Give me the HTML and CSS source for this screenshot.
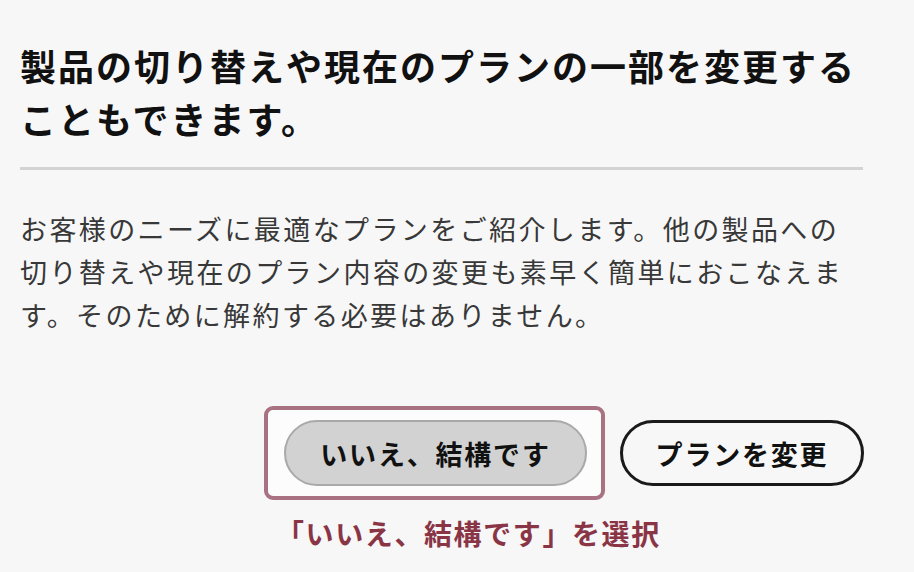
FILE: index.html
```html
<!DOCTYPE html>
<html lang="ja">
<head>
<meta charset="utf-8">
<title>プランの変更</title>
<link rel="stylesheet" href="styles.css">
</head>
<body>
<main class="dialog">
  <h1 class="title">製品の切り替えや現在のプランの一部を変更することもできます。</h1>
  <hr class="divider">
  <p class="desc">お客様のニーズに最適なプランをご紹介します。他の製品への切り替えや現在のプラン内容の変更も素早く簡単におこなえます。そのために解約する必要はありません。</p>
  <div class="actions">
    <div class="choice">
      <div class="highlight">
        <button class="btn btn-secondary">いいえ、結構です</button>
      </div>
      <div class="caption">「いいえ、結構です」を選択</div>
    </div>
    <button class="btn btn-outline">プランを変更</button>
  </div>
</main>
</body>
</html>
```

FILE: styles.css
```css
html, body {
  margin: 0;
  padding: 0;
  background: #f7f7f7;
}
body {
  width: 914px;
  height: 572px;
  overflow: hidden;
  font-family: "Noto Sans CJK JP", "Noto Sans", sans-serif;
}
.dialog {
  width: 843px;
  padding: 39px 0 0 20px;
}
.title {
  margin: 0;
  font-size: 36px;
  line-height: 53px;
  font-weight: 700;
  letter-spacing: 2px;
  color: #111;
}
.divider {
  margin: 22px 0 0 0;
  border: 0;
  height: 3px;
  background: #d3d3d3;
}
.desc {
  margin: 37px 0 0 0;
  font-size: 27px;
  line-height: 43px;
  letter-spacing: 2.4px;
  color: #383838;
}
.actions {
  display: flex;
  justify-content: flex-end;
  align-items: flex-start;
  gap: 15px;
  margin-top: 70px;
  margin-right: -1px;
}
.choice {
  display: flex;
  flex-direction: column;
  align-items: flex-start;
}
.highlight {
  border: 4px solid #a87282;
  border-radius: 9px;
  background: #fcfcfc;
  padding: 10px 14px 10px 16px;
}
.btn {
  font-family: "Noto Sans CJK JP", "Noto Sans", sans-serif;
  font-size: 27px;
  font-weight: 700;
  letter-spacing: 1.8px;
  color: #111;
  height: 66px;
  border-radius: 33px;
  cursor: pointer;
  padding: 0;
}
.btn-secondary {
  width: 303px;
  background: #d2d2d2;
  border: 2px solid #a9a9a9;
}
.btn-outline {
  width: 244px;
  margin-top: 14px;
  background: transparent;
  border: 3px solid #1a1a1a;
}
.caption {
  width: 0;
  margin-top: 15px;
  padding-left: 12px;
  white-space: nowrap;
  font-size: 28px;
  line-height: 36px;
  font-weight: 700;
  letter-spacing: 1.6px;
  color: #8a3546;
}
```
